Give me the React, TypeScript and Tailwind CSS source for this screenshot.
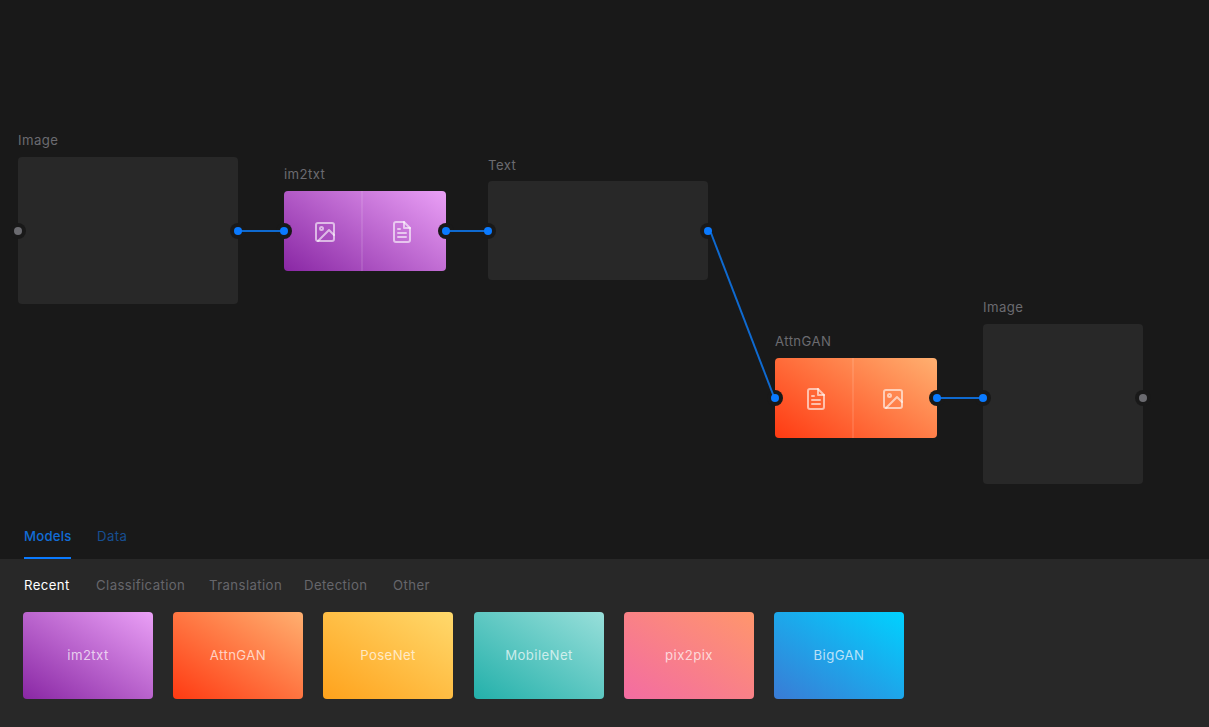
import type { ReactNode } from "react";
import { FiFileText, FiImage } from "react-icons/fi";

const models = [
  { name: "im2txt", fill: "from-[#8927a4] to-[#eaa0f6]", gap: "" },
  { name: "AttnGAN", fill: "from-[#ff3a12] to-[#ffb070]", gap: "ml-5" },
  { name: "PoseNet", fill: "from-[#ffa21c] to-[#ffd96c]", gap: "ml-5" },
  { name: "MobileNet", fill: "from-[#23b0aa] to-[#98dfda]", gap: "ml-[21px]" },
  { name: "pix2pix", fill: "from-[#f36ca2] to-[#ff966c]", gap: "ml-5" },
  { name: "BigGAN", fill: "from-[#3a7bd5] to-[#00d2ff]", gap: "ml-5" },
];

const filters = [
  { name: "Recent", style: "w-[72px] text-white" },
  { name: "Classification", style: "w-[113px] text-[#66666b]" },
  { name: "Translation", style: "w-[95px] text-[#66666b]" },
  { name: "Detection", style: "w-[89px] text-[#66666b]" },
  { name: "Other", style: "text-[#66666b]" },
];

const ports = [
  { x: 18, y: 231, linked: false },
  { x: 238, y: 231, linked: true },
  { x: 284, y: 231, linked: true },
  { x: 446, y: 231, linked: true },
  { x: 488, y: 231, linked: true },
  { x: 708, y: 231, linked: true },
  { x: 775, y: 398, linked: true },
  { x: 937, y: 398, linked: true },
  { x: 983, y: 398, linked: true },
  { x: 1143, y: 398, linked: false },
];

const links = [
  [238, 231, 284, 231],
  [446, 231, 488, 231],
  [711, 233, 774, 397],
  [937, 398, 983, 398],
];

function Node({ label, place, children }: { label: string; place: string; children: ReactNode }) {
  return (
    <div className={`absolute ${place}`}>
      <div className="mb-2 h-[17px] text-[#6b6b70]">{label}</div>
      {children}
    </div>
  );
}

function ModelBody({ fill, input, output }: { fill: string; input: ReactNode; output: ReactNode }) {
  return (
    <div className={`flex h-20 w-[162px] overflow-hidden rounded bg-linear-[35deg] text-white/60 ${fill}`}>
      <div className="flex w-[77px] items-center pt-0.5 pl-[29px]">{input}</div>
      <div className="w-0.5 bg-white/10" />
      <div className="flex flex-1 items-center pt-0.5 pl-[27px]">{output}</div>
    </div>
  );
}

export default function App() {
  return (
    <div className="flex h-[727px] w-full flex-col overflow-hidden bg-[#191919] font-['Inter',sans-serif] text-[13.2px] leading-[17px] tracking-[0.4px]">
      <main className="relative h-[514px] shrink-0">
        <Node label="Image" place="left-[18px] top-[132px]">
          <div className="h-[147px] w-[220px] rounded bg-[#282828]" />
        </Node>
        <Node label="im2txt" place="left-[284px] top-[166px]">
          <ModelBody fill="from-[#8927a4] to-[#eaa0f6]" input={<FiImage size={24} />} output={<FiFileText size={24} />} />
        </Node>
        <Node label="Text" place="left-[488px] top-[156px] leading-[19px]">
          <div className="h-[99px] w-[220px] rounded bg-[#282828]" />
        </Node>
        <Node label="AttnGAN" place="left-[775px] top-[333px]">
          <ModelBody fill="from-[#ff3a12] to-[#ffb070]" input={<FiFileText size={24} />} output={<FiImage size={24} />} />
        </Node>
        <Node label="Image" place="left-[983px] top-[299px]">
          <div className="h-40 w-40 rounded bg-[#282828]" />
        </Node>
        <svg className="absolute inset-0" width="1209" height="514" fill="none">
          {ports.map((p) => (
            <circle key={p.x} cx={p.x} cy={p.y} r="8" fill="#191919" />
          ))}
          {links.map(([x1, y1, x2, y2]) => (
            <line key={x1} x1={x1} y1={y1} x2={x2} y2={y2} stroke="#0f6ad0" strokeWidth="2" />
          ))}
          {ports.map((p) => (
            <circle key={p.x} cx={p.x} cy={p.y} r="4" fill={p.linked ? "#0a7aff" : "#6b6b70"} />
          ))}
        </svg>
      </main>

      <nav className="flex h-[45px] shrink-0 items-stretch pl-6">
        <button className="w-[47px] border-b-2 border-[#0a7aff] pt-[14px] pb-3 text-left font-medium tracking-[0.2px] whitespace-nowrap text-[#126cd6]">
          Models
        </button>
        <button className="ml-[26px] pt-[14px] pb-[14px] text-[#174f92]">Data</button>
      </nav>

      <section className="flex flex-1 flex-col bg-[#282828]">
        <div className="flex pt-[18px] pl-6">
          {filters.map((f) => (
            <div key={f.name} className={`shrink-0 ${f.style}`}>
              {f.name}
            </div>
          ))}
        </div>
        <div className="mt-[18px] flex pl-[23px]">
          {models.map((m) => (
            <div
              key={m.name}
              className={`flex h-[87px] w-[130px] shrink-0 items-center justify-center rounded bg-linear-[33deg] text-white/70 ${m.fill} ${m.gap}`}
            >
              {m.name}
            </div>
          ))}
        </div>
      </section>
    </div>
  );
}
